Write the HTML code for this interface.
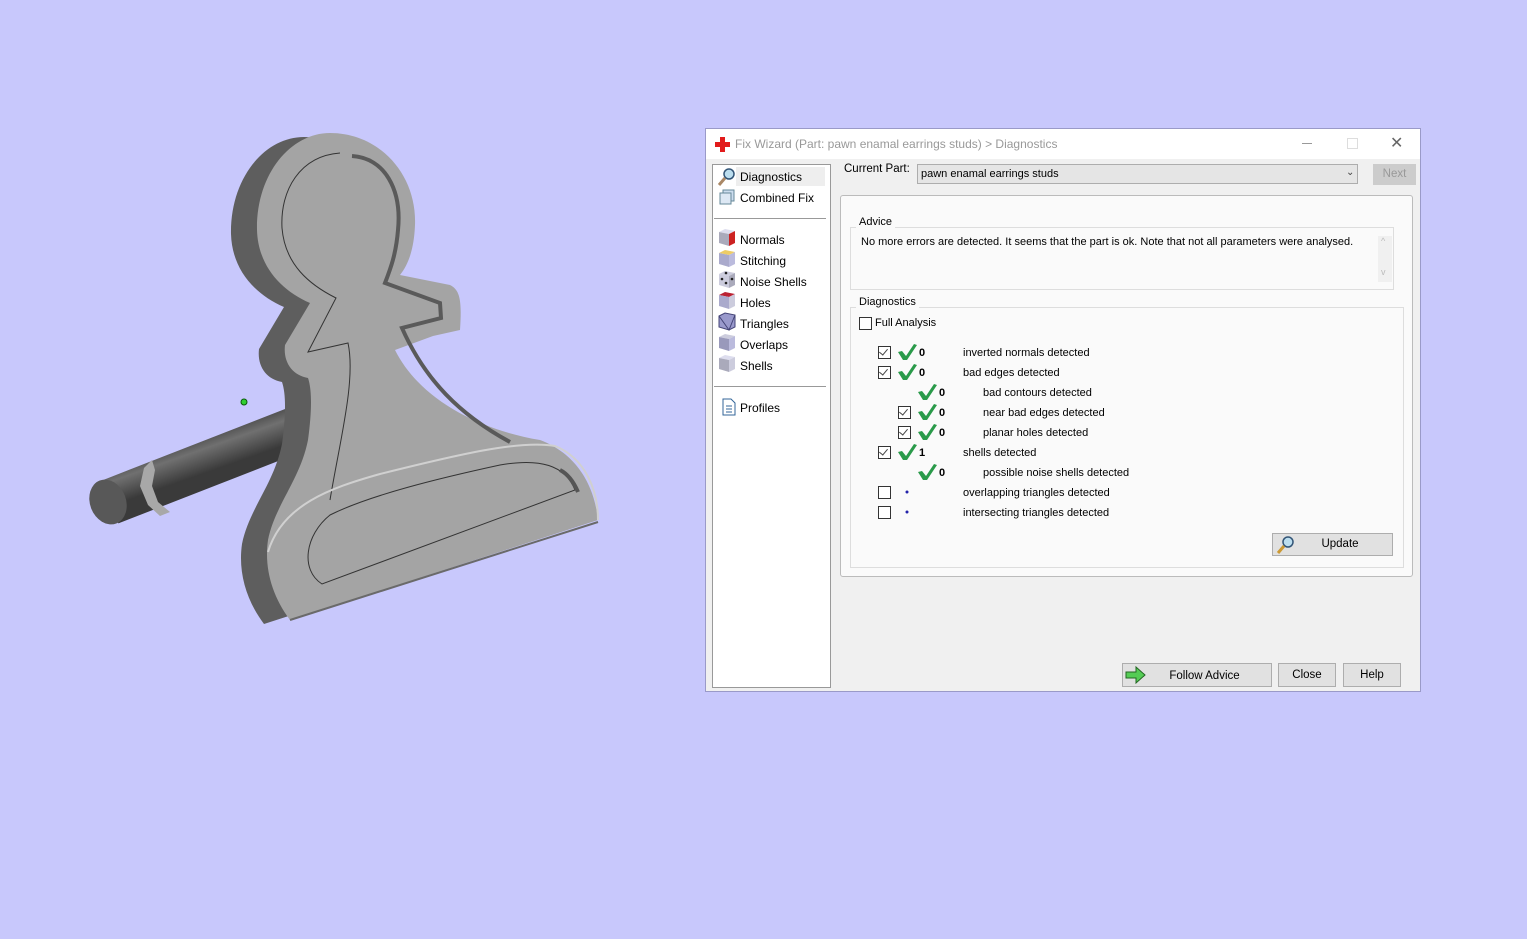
<!DOCTYPE html>
<html><head><meta charset="utf-8"><style>
body{margin:0;width:1527px;height:939px;background:#c8c8fc;position:relative;overflow:hidden;font-family:"Liberation Sans",sans-serif;}
.a{position:absolute;}
.t{font-size:11px;color:#000;white-space:nowrap;}
.s{font-size:12px;color:#000;white-space:nowrap;}
.cb{position:absolute;width:11px;height:11px;border:1px solid #333;background:#fff;}
.cb.on::after{content:"";position:absolute;left:2px;top:0px;width:4px;height:7px;border:solid #444;border-width:0 1px 1px 0;transform:rotate(40deg);}
.btn{position:absolute;background:#e1e1e1;border:1px solid #adadad;font-size:11.5px;text-align:center;box-sizing:border-box;}
</style></head><body>

<svg class="a" style="left:0;top:0" width="700" height="700" viewBox="0 0 700 700">
<defs>
<linearGradient id="cyl" gradientUnits="userSpaceOnUse" x1="200" y1="430" x2="214" y2="470">
<stop offset="0" stop-color="#3c3c3c"/><stop offset="0.45" stop-color="#707070"/><stop offset="1" stop-color="#3a3a3a"/></linearGradient>
</defs>
<!-- cylinder -->
<line x1="110" y1="502" x2="320" y2="420" stroke="url(#cyl)" stroke-width="46"/>
<ellipse cx="108" cy="502" rx="18" ry="23" transform="rotate(-21 108 502)" fill="#585858"/>
<path d="M152,460 L144,468 L140,486 L148,505 L160,516 L170,512 L158,502 L152,486 L155,470 Z" fill="#a8a8a8"/>
<!-- back (dark) -->
<path transform="translate(-26,4)" d="M290,620 C272,596 264,568 268,540 C275,505 300,480 308,440 C312,410 312,390 308,378 C292,375 283,362 285,345 L310,303 C280,290 258,265 257,230 C256,175 290,133 330,133 C380,133 417,175 415,225 C414,250 408,265 400,275 L450,285 C460,290 462,300 460,330 L433,336 L395,350 C420,400 480,430 540,440 C580,455 595,490 598,520 Z" fill="#5e5e5e"/>
<!-- front -->
<path d="M290,620 C272,596 264,568 268,540 C275,505 300,480 308,440 C312,410 312,390 308,378 C292,375 283,362 285,345 L310,303 C280,290 258,265 257,230 C256,175 290,133 330,133 C380,133 417,175 415,225 C414,250 408,265 400,275 L450,285 C460,290 462,300 460,330 L433,336 L395,350 C420,400 480,430 540,440 C580,455 595,490 598,520 Z" fill="#a4a4a4"/>
<!-- inner recess shading -->
<path d="M352,156 C385,158 402,190 398,230 C396,255 390,270 385,283 L440,303 L441,318 L402,328 C425,380 460,415 510,442" fill="none" stroke="#5a5a5a" stroke-width="4"/>
<path d="M340,153 C300,156 280,190 282,228 C285,265 310,285 336,298 L308,352 L348,343 C356,380 340,440 330,500" fill="none" stroke="#333" stroke-width="1"/>
<!-- base slab -->
<path d="M268,552 C282,505 330,488 380,474 C460,454 520,440 555,446 C585,458 598,490 598,520" fill="none" stroke="#d0d0d0" stroke-width="2"/>
<path d="M322,584 C300,570 305,535 330,515 C370,495 440,478 500,465 C540,458 565,465 575,490 Z" fill="none" stroke="#333" stroke-width="1"/>
<path d="M560,470 C570,475 575,485 578,492" stroke="#555" stroke-width="4" fill="none"/>
<path d="M290,620 L598,522" stroke="#6a6a6a" stroke-width="2"/>
<circle cx="244" cy="402" r="3" fill="#2fcf2f" stroke="#0a5a0a" stroke-width="1"/>
</svg>

<!-- dialog -->
<div class="a" style="left:705px;top:128px;width:716px;height:564px;background:#f0f0f0;border:1px solid #9a9ac8;box-sizing:border-box;">
  <div class="a" style="left:0;top:0;width:714px;height:30px;background:#fff;"></div>
  <svg class="a" style="left:9px;top:8px" width="15" height="15" viewBox="0 0 15 15"><path d="M5,0h5v5h5v5h-5v5h-5v-5h-5v-5h5z" fill="#e21b1b"/></svg>
  <div class="a" style="left:29px;top:8px;font-size:12px;color:#999">Fix Wizard (Part: pawn enamal earrings studs) &gt; Diagnostics</div>
  <div class="a" style="left:596px;top:14px;width:10px;height:1px;background:#999"></div>
  <div class="a" style="left:641px;top:9px;width:9px;height:9px;border:1px solid #ddd"></div>
  <div class="a" style="left:684px;top:4px;font-size:16px;color:#666">✕</div>

  <div class="a" style="left:6px;top:35px;width:119px;height:524px;background:#fff;border:1px solid #999;box-sizing:border-box;"></div>
  <div class="a" style="left:30px;top:38px;width:89px;height:19px;background:#eee"></div>
  <div class="a" style="left:8px;top:89px;width:112px;height:1px;background:#999"></div>
  <div class="a" style="left:8px;top:257px;width:112px;height:1px;background:#999"></div>
  <svg class="a" style="left:11px;top:38px" width="20" height="20"><circle cx="12" cy="7" r="5" fill="#bde" stroke="#357" stroke-width="1.5"/><path d="M8,11 L2,18" stroke="#a86" stroke-width="3"/></svg>
  <svg class="a" style="left:12px;top:60px" width="18" height="16"><rect x="5" y="1" width="11" height="11" fill="#cde" stroke="#689"/><rect x="2" y="4" width="11" height="11" fill="#dde8f4" stroke="#689"/></svg>
  <div class="a s" style="left:34px;top:41px">Diagnostics</div>
  <div class="a s" style="left:34px;top:62px">Combined Fix</div>
  <svg class="a" style="left:11px;top:99px" width="20" height="150">
    <g><path d="M2,4 L8,1 L18,3 L12,6Z" fill="#dde"/><path d="M2,4 L12,6 L12,18 L2,15Z" fill="#aab"/><path d="M12,6 L18,3 L18,15 L12,18Z" fill="#c22"/></g>
    <g transform="translate(0,21)"><path d="M2,4 L8,1 L18,3 L12,6Z" fill="#ec6"/><path d="M2,4 L12,6 L12,18 L2,15Z" fill="#aac"/><path d="M12,6 L18,3 L18,15 L12,18Z" fill="#bbd"/></g>
    <g transform="translate(0,42)"><path d="M2,4 L8,1 L18,3 L12,6Z" fill="#ccd"/><path d="M2,4 L12,6 L12,18 L2,15Z" fill="#ccd"/><path d="M12,6 L18,3 L18,15 L12,18Z" fill="#aab"/><circle cx="5" cy="9" r="1.3" fill="#222"/><circle cx="9" cy="13" r="1.3" fill="#222"/><circle cx="15" cy="9" r="1.3" fill="#222"/><circle cx="9" cy="3" r="1.3" fill="#222"/></g>
    <g transform="translate(0,63)"><path d="M2,4 L8,1 L18,3 L12,6Z" fill="#b23"/><path d="M2,4 L12,6 L12,18 L2,15Z" fill="#aac"/><path d="M12,6 L18,3 L18,15 L12,18Z" fill="#ccd"/></g>
    <g transform="translate(0,84)"><path d="M2,4 L8,1 L18,3 L18,15 L12,18 L2,15Z" fill="#99c" stroke="#447"/><path d="M2,4 L12,18 L18,3" fill="none" stroke="#447"/></g>
    <g transform="translate(0,105)"><path d="M2,4 L8,1 L18,3 L12,6Z" fill="#ccd"/><path d="M2,4 L12,6 L12,18 L2,15Z" fill="#99b"/><path d="M12,6 L18,3 L18,15 L12,18Z" fill="#bbd"/></g>
    <g transform="translate(0,126)"><path d="M2,4 L8,1 L18,3 L12,6Z" fill="#dde"/><path d="M2,4 L12,6 L12,18 L2,15Z" fill="#aab"/><path d="M12,6 L18,3 L18,15 L12,18Z" fill="#ccd"/></g>
  </svg>
  <div class="a s" style="left:34px;top:104px">Normals</div>
  <div class="a s" style="left:34px;top:125px">Stitching</div>
  <div class="a s" style="left:34px;top:146px">Noise Shells</div>
  <div class="a s" style="left:34px;top:167px">Holes</div>
  <div class="a s" style="left:34px;top:188px">Triangles</div>
  <div class="a s" style="left:34px;top:209px">Overlaps</div>
  <div class="a s" style="left:34px;top:230px">Shells</div>
  <svg class="a" style="left:16px;top:269px" width="14" height="18"><path d="M1,1 H9 L13,5 V17 H1Z" fill="#fff" stroke="#369"/><path d="M4,8H10M4,11H10M4,14H10" stroke="#369"/></svg>
  <div class="a s" style="left:34px;top:272px">Profiles</div>

  <div class="a t" style="left:138px;top:34px;font-size:11.5px">Current Part:</div>
  <div class="a" style="left:211px;top:35px;width:441px;height:20px;background:#e5e5e5;border:1px solid #adadad;box-sizing:border-box;"></div>
  <div class="a t" style="left:215px;top:39px">pawn enamal earrings studs</div>
  <div class="a" style="left:640px;top:38px;font-size:10px;color:#444">⌄</div>
  <div class="btn" style="left:667px;top:35px;width:43px;height:21px;color:#999;background:#ccc;border-color:#ccc;line-height:19px">Next</div>

  <div class="a" style="left:134px;top:66px;width:573px;height:382px;background:#fafafa;border:1px solid #bbb;border-radius:3px;box-sizing:border-box;"></div>
  <div class="a" style="left:144px;top:98px;width:544px;height:63px;border:1px solid #ddd;box-sizing:border-box;"></div>
  <div class="a t" style="left:150px;top:87px;background:#fafafa;padding:0 3px">Advice</div>
  <div class="a t" style="left:155px;top:107px">No more errors are detected. It seems that the part is ok. Note that not all parameters were analysed.</div>
  <div class="a" style="left:672px;top:107px;width:14px;height:46px;background:#f0f0f0"></div>
  <div class="a" style="left:675px;top:107px;font-size:9px;color:#bbb">^</div>
  <div class="a" style="left:675px;top:138px;font-size:9px;color:#bbb">v</div>

  <div class="a" style="left:144px;top:178px;width:554px;height:261px;border:1px solid #ddd;box-sizing:border-box;"></div>
  <div class="a t" style="left:150px;top:167px;background:#fafafa;padding:0 3px">Diagnostics</div>
  <div class="cb" style="left:153px;top:188px"></div>
  <div class="a t" style="left:169px;top:188px">Full Analysis</div>
</div>

<div class="cb on" style="left:878px;top:346px"></div>
<div class="cb on" style="left:878px;top:366px"></div>
<div class="cb on" style="left:898px;top:406px"></div>
<div class="cb on" style="left:898px;top:426px"></div>
<div class="cb on" style="left:878px;top:446px"></div>
<div class="cb" style="left:878px;top:486px"></div>
<div class="cb" style="left:878px;top:506px"></div>
<svg class="a" style="left:0;top:0" width="1527" height="939">
  <g fill="#2a9a4a">
    <path d="M898,352 L902,351 L906,356 L914,344 L917,345 L907,360 L903,360Z"/>
    <path d="M898,372 L902,371 L906,376 L914,364 L917,365 L907,380 L903,380Z"/>
    <path d="M918,392 L922,391 L926,396 L934,384 L937,385 L927,400 L923,400Z"/>
    <path d="M918,412 L922,411 L926,416 L934,404 L937,405 L927,420 L923,420Z"/>
    <path d="M918,432 L922,431 L926,436 L934,424 L937,425 L927,440 L923,440Z"/>
    <path d="M898,452 L902,451 L906,456 L914,444 L917,445 L907,460 L903,460Z"/>
    <path d="M918,472 L922,471 L926,476 L934,464 L937,465 L927,480 L923,480Z"/>
  </g>
  <circle cx="907" cy="492" r="1.5" fill="#22a"/>
  <circle cx="907" cy="512" r="1.5" fill="#22a"/>
  <g font-family="Liberation Sans" font-size="11" font-weight="bold">
    <text x="919" y="356">0</text><text x="919" y="376">0</text><text x="939" y="396">0</text><text x="939" y="416">0</text><text x="939" y="436">0</text><text x="919" y="456">1</text><text x="939" y="476">0</text>
  </g>
  <g font-family="Liberation Sans" font-size="11">
    <text x="963" y="356">inverted normals detected</text>
    <text x="963" y="376">bad edges detected</text>
    <text x="983" y="396">bad contours detected</text>
    <text x="983" y="416">near bad edges detected</text>
    <text x="983" y="436">planar holes detected</text>
    <text x="963" y="456">shells detected</text>
    <text x="983" y="476">possible noise shells detected</text>
    <text x="963" y="496">overlapping triangles detected</text>
    <text x="963" y="516">intersecting triangles detected</text>
  </g>
</svg>

<div class="btn" style="left:1272px;top:533px;width:121px;height:23px;line-height:21px;padding-left:15px">Update</div>
<svg class="a" style="left:1276px;top:535px" width="20" height="20"><circle cx="12" cy="7" r="5" fill="#bde" stroke="#357" stroke-width="1.5"/><path d="M8,11 L2,18" stroke="#c93" stroke-width="3"/></svg>

<div class="btn" style="left:1122px;top:663px;width:150px;height:24px;line-height:24px;padding-left:15px">Follow Advice</div>
<svg class="a" style="left:1125px;top:666px" width="22" height="18"><path d="M1,6 H11 V1 L20,9 L11,17 V12 H1Z" fill="#5c5" stroke="#262" stroke-width="1"/></svg>
<div class="btn" style="left:1278px;top:663px;width:58px;height:24px;line-height:22px">Close</div>
<div class="btn" style="left:1343px;top:663px;width:58px;height:24px;line-height:22px">Help</div>
</body></html>
